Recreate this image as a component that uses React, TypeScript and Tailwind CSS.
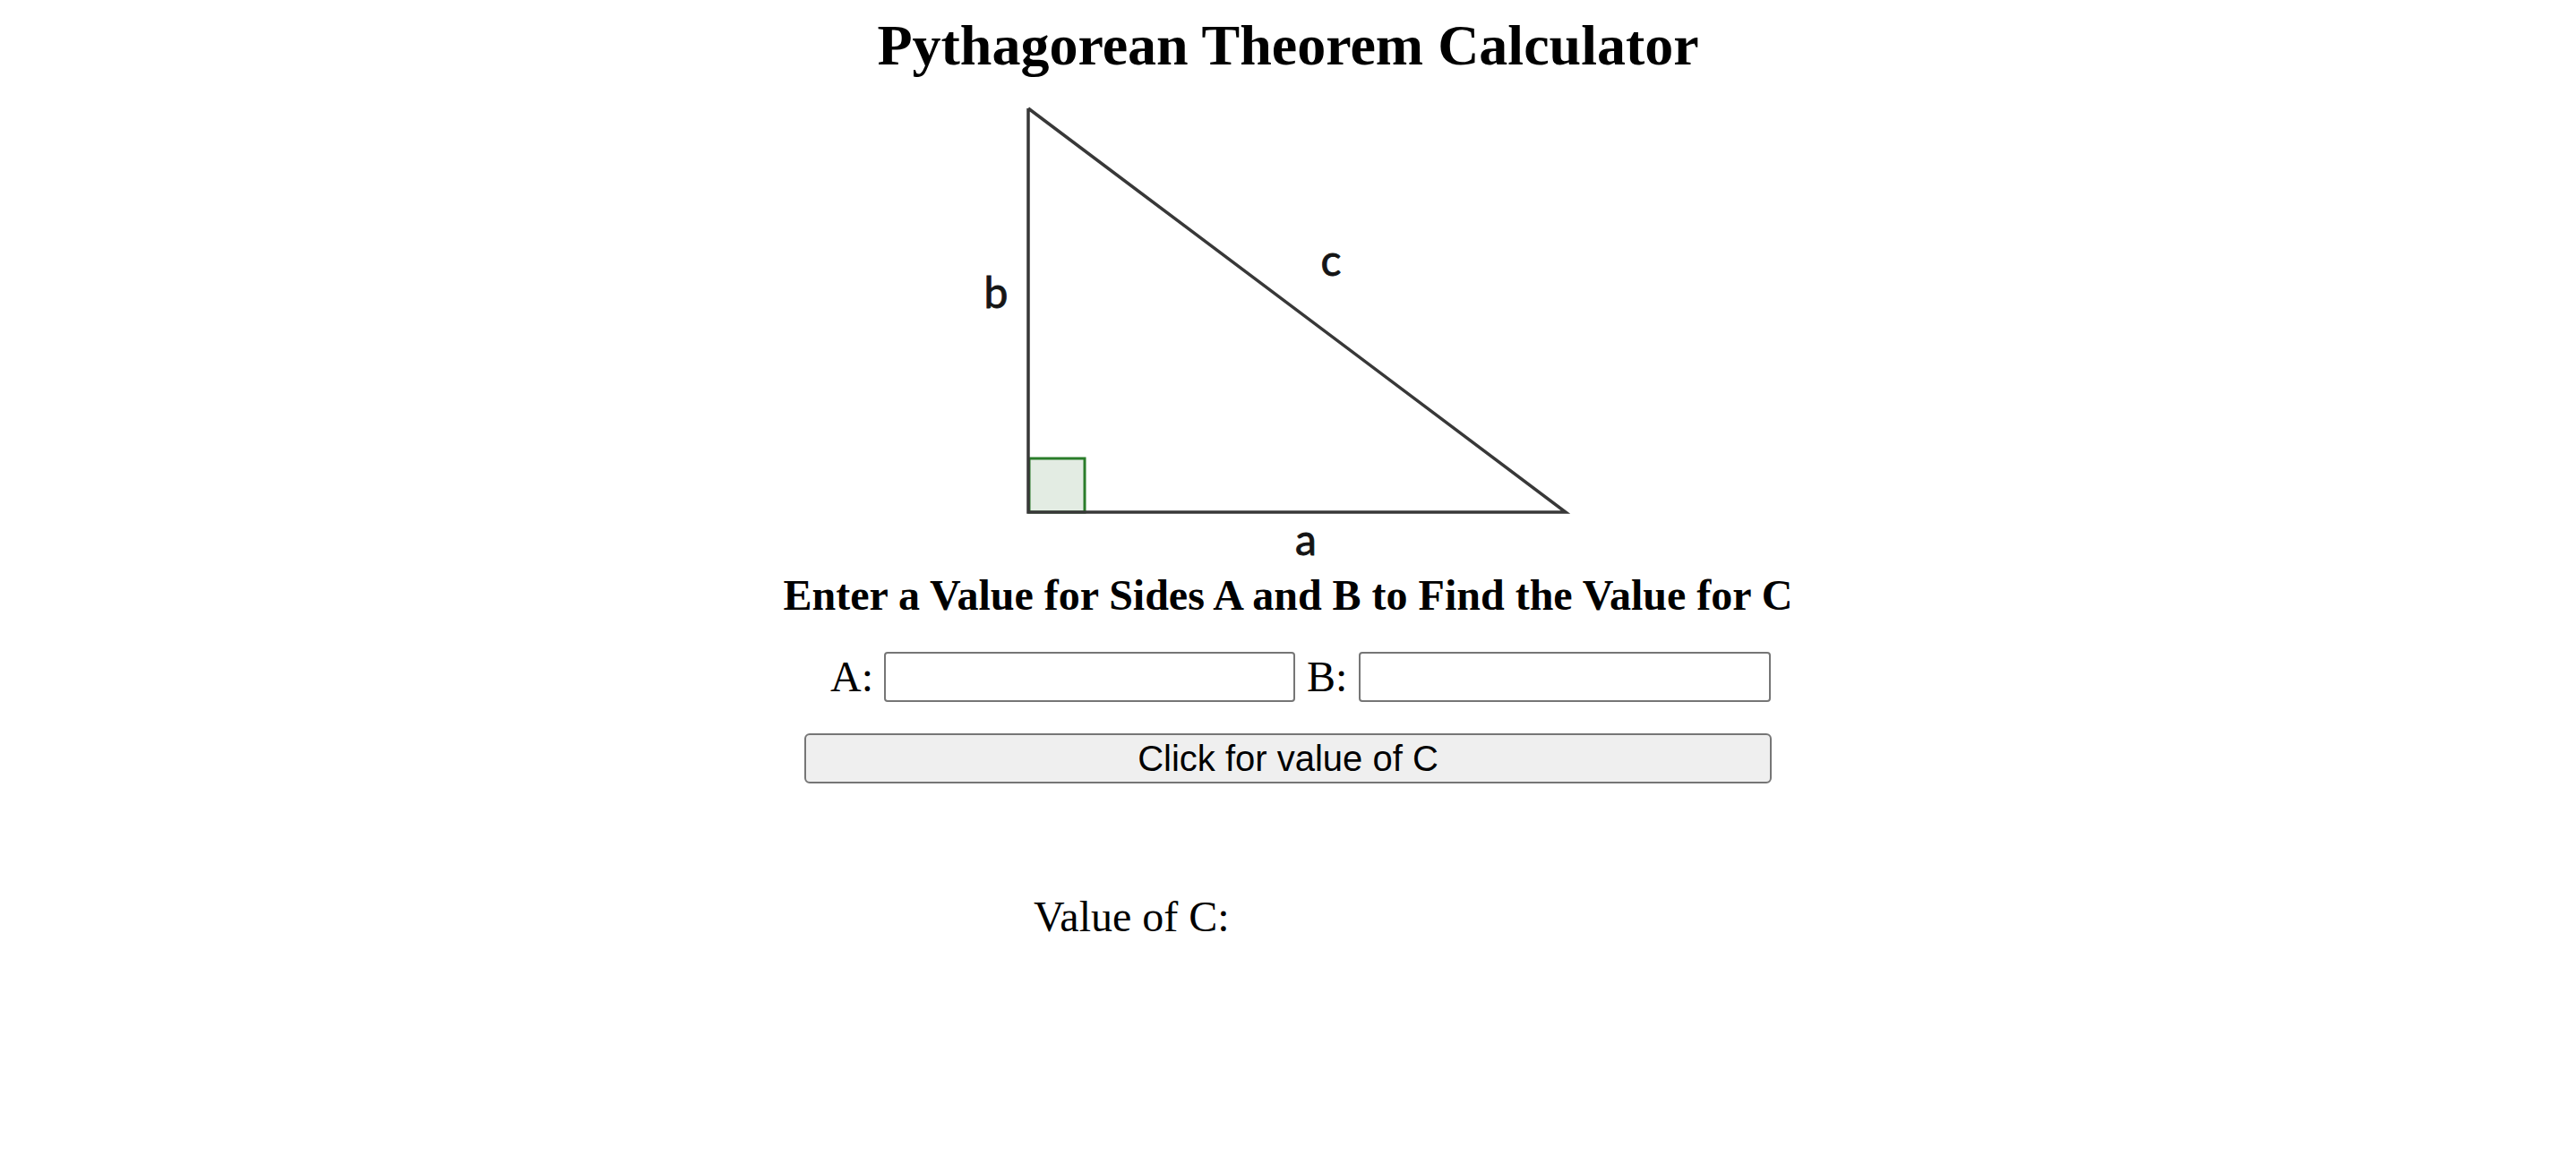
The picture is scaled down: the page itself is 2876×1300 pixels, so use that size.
import React from "react";

export default function App() {
  return (
    <div className="w-full min-h-[1300px] bg-white text-black font-['Liberation_Serif','Times_New_Roman',serif]">
      <h1 className="pt-[14px] text-center text-[64px] leading-[74px] font-bold">
        Pythagorean Theorem Calculator
      </h1>
      <div className="mx-auto w-[1080px]">
        <svg width="1080" height="549" viewBox="0 0 1080 549" className="block">
          <rect x="251" y="424" width="62" height="60" fill="#e3ece3" stroke="#2a7d2a" strokeWidth="3" />
          <polyline
            points="250,33 250,484 850,484 250,33"
            fill="none"
            stroke="#383838"
            strokeWidth="3.5"
            strokeLinejoin="miter"
          />
          <g fontFamily="Lato, 'Open Sans', sans-serif" fontSize="48" fill="#151515" stroke="#151515" strokeWidth="0.9">
            <text x="214" y="256" textAnchor="middle">
              b
            </text>
            <text x="588" y="220" textAnchor="middle">
              c
            </text>
            <text x="560" y="532" textAnchor="middle">
              a
            </text>
          </g>
        </svg>
      </div>
      <h2 className="text-center text-[48px] leading-[56px] font-bold">
        Enter a Value for Sides A and B to Find the Value for C
      </h2>
      <div className="mx-auto w-[1080px]">
        <div className="mt-[35px] flex items-center pl-[29px] text-[48px] leading-[56px]">
          <span>A:</span>
          <input
            type="text"
            className="ml-[12px] h-[56px] w-[459px] rounded-[4px] border-2 border-[#767676] bg-white px-2 text-[26px] outline-none"
          />
          <span className="ml-[13px]">B:</span>
          <input
            type="text"
            className="ml-[13px] h-[56px] w-[460px] rounded-[4px] border-2 border-[#767676] bg-white px-2 text-[26px] outline-none"
          />
        </div>
        <button
          type="button"
          className="mt-[35px] flex h-[56px] w-[1080px] items-center justify-center rounded-[6px] border-2 border-[#767676] bg-[#efefef] font-['Liberation_Sans',Arial,sans-serif] text-[40px] leading-[46px] text-black"
        >
          Click for value of C
        </button>
        <div className="mt-[121px] pl-[256px] text-[48px] leading-[56px]">Value of C:</div>
      </div>
    </div>
  );
}
